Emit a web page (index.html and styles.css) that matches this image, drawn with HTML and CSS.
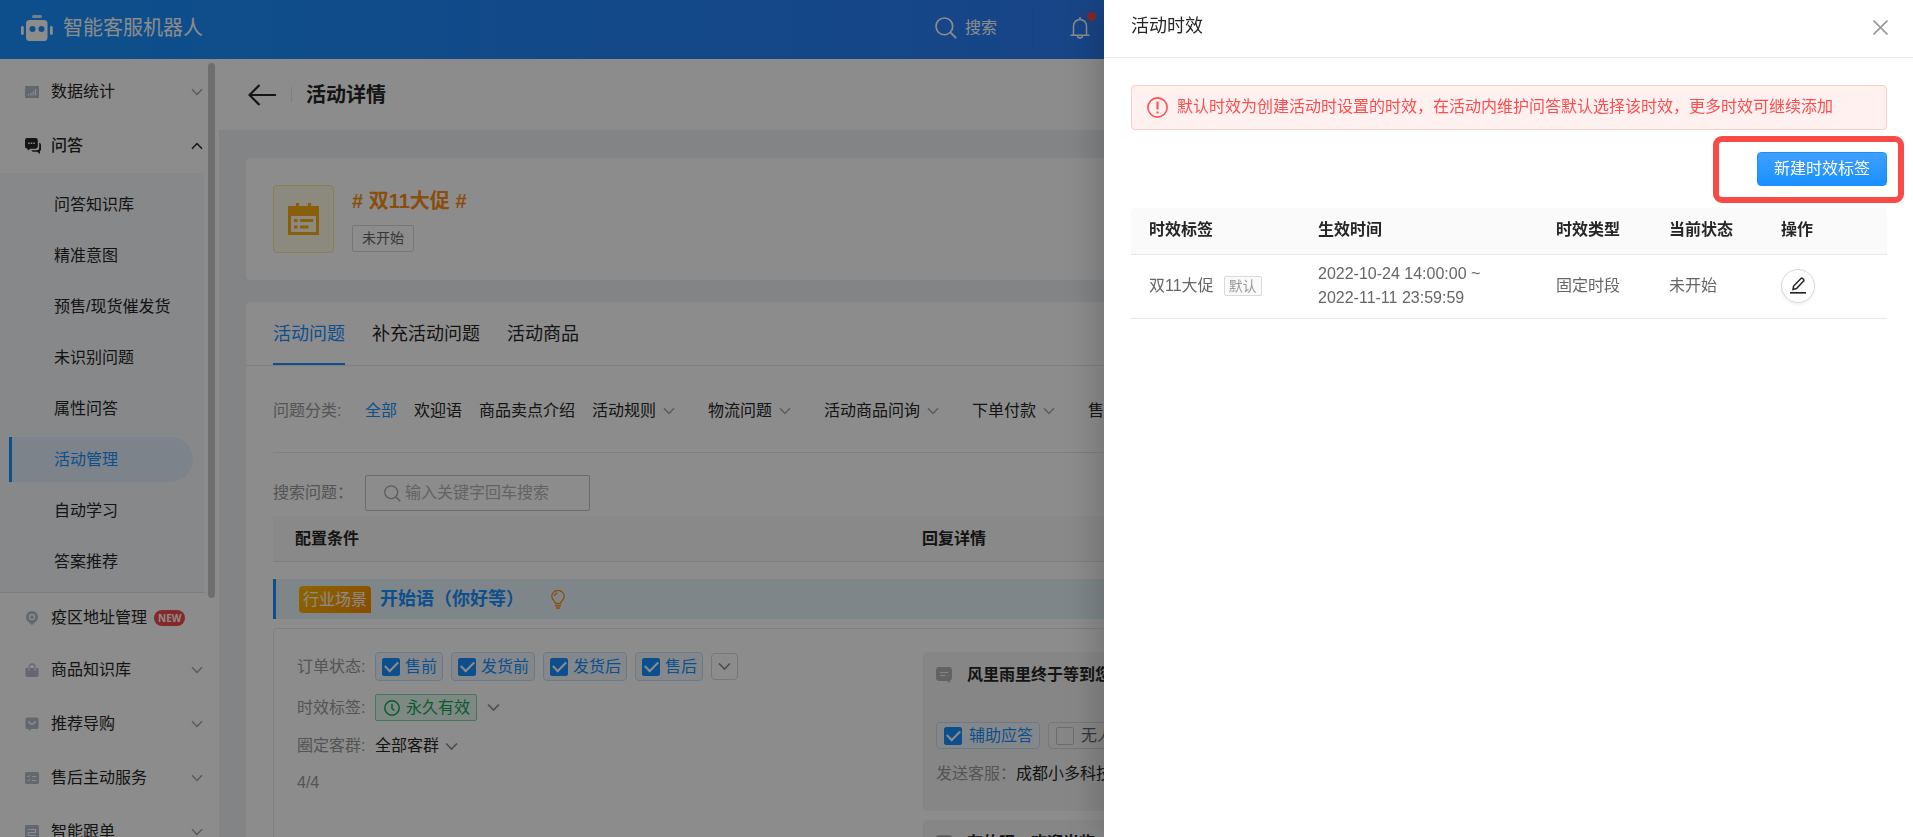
FILE: index.html
```html
<!DOCTYPE html>
<html lang="zh-CN">
<head>
<meta charset="utf-8">
<meta name="viewport" content="width=device-width, initial-scale=1">
<title>智能客服机器人</title>
<link rel="stylesheet" href="styles.css">
</head>
<body>
<svg class="defs" aria-hidden="true">
  <symbol id="chev" viewBox="0 0 12 8"><path d="M1 1.2 6 6.4 11 1.2" fill="none" stroke="currentColor" stroke-width="1.5"/></symbol>
  <symbol id="search" viewBox="0 0 20 20"><circle cx="8.5" cy="8.5" r="7.6" fill="none" stroke="currentColor" stroke-width="1.5"/><path d="m14 14 5.2 5.2" stroke="currentColor" stroke-width="1.7"/></symbol>
  <symbol id="msg" viewBox="0 0 16 16"><path d="M3 0h10a3 3 0 0 1 3 3v8a3 3 0 0 1-2 2.8V16l-3.500-2H3a3 3 0 0 1-3-3V3a3 3 0 0 1 3-3z" fill="currentColor"/><path d="M4 5.500h8M4 8.500h5" stroke="#f5f5f5" stroke-width="1.200"/></symbol>
</svg>

<div class="app">
  <header class="topbar">
    <div class="brand">
      <svg class="robot" width="32" height="26" viewBox="0 0 32 26"><path d="M12.500 0h7q1.500 0 1.500 1.500T19.500 3h-7Q11 3 11 1.500T12.500 0z" fill="#fff" opacity=".8"/><rect x="5" y="5" width="21.500" height="21" rx="3.500" fill="#fff"/><rect x="0" y="11" width="2.800" height="9" rx="1.400" fill="#fff"/><rect x="29" y="11" width="2.800" height="9" rx="1.400" fill="#fff"/><circle cx="11.500" cy="14" r="3" fill="#1890ff"/><circle cx="20.500" cy="14" r="3" fill="#1890ff"/></svg>
      <span>智能客服机器人</span>
    </div>
    <div class="tools">
      <button class="tool search-tool"><svg width="22" height="22"><use href="#search"/></svg>搜索</button>
      <span class="tool-sep"></span>
      <button class="tool bell" aria-label="通知"><svg width="20" height="22" viewBox="0 0 20 22"><path d="M3.500 18V9a6.500 6.500 0 0 1 13 0v9M.5 18.200h19M10 0v2.500M7.500 18.500a2.500 2.500 0 0 0 5 0" fill="none" stroke="currentColor" stroke-width="1.500"/></svg><i class="dot"></i></button>
    </div>
  </header>

  <div class="body">
    <nav class="side">
      <a class="item" href="#"><svg class="ico" viewBox="0 0 14 14"><rect y="1" width="14" height="12" rx="1" fill="currentColor"/><path d="M3.500 10.500v-1.500M6 10.500V8M8.200 10.500V6.500M10.500 10.500V4" stroke="#fff" stroke-width="1.200"/></svg>数据统计<svg class="chev"><use href="#chev"/></svg></a>
      <a class="item open" href="#"><svg class="ico" viewBox="0 0 15 15"><path d="M2 0h8a2 2 0 0 1 2 2v6a2 2 0 0 1-2 2H5l-2.500 2v-2H2a2 2 0 0 1-2-2V2a2 2 0 0 1 2-2z" fill="currentColor"/><path d="M13.300 4.500A2 2 0 0 1 15 6.500v4a2 2 0 0 1-1 1.800V15l-2.800-2H8a2 2 0 0 1-2-1.500h5.300a2 2 0 0 0 2-2z" fill="currentColor"/><path d="M3 5h1.400M5.400 5h1.400M7.800 5h1.400" stroke="#fff" stroke-width="1.400"/></svg>问答<svg class="chev up"><use href="#chev"/></svg></a>
      <div class="sub">
        <a href="#">问答知识库</a>
        <a href="#">精准意图</a>
        <a href="#">预售/现货催发货</a>
        <a href="#">未识别问题</a>
        <a href="#">属性问答</a>
        <a class="active" href="#">活动管理</a>
        <a href="#">自动学习</a>
        <a href="#">答案推荐</a>
      </div>
      <a class="item short" href="#"><svg class="ico" viewBox="0 0 14 14"><path d="M7 0a6 6 0 0 1 6 6c0 3.600-3.500 6-6 8-2.500-2-6-4.400-6-8a6 6 0 0 1 6-6z" fill="currentColor"/><circle cx="7" cy="6" r="2.500" fill="none" stroke="#fff" stroke-width="1.300"/></svg>疫区地址管理<b class="new">NEW</b></a>
      <a class="item" href="#"><svg class="ico" viewBox="0 0 14 14"><path d="M.5 5h13V12a2 2 0 0 1-2 2h-9a2 2 0 0 1-2-2z" fill="currentColor"/><path d="M4 8V4a3 3 0 0 1 6 0v4" fill="none" stroke="currentColor" stroke-width="1.300"/><path d="M4 5v3M10 5v3" stroke="#fff" stroke-width="1"/></svg>商品知识库<svg class="chev"><use href="#chev"/></svg></a>
      <a class="item" href="#"><svg class="ico" viewBox="0 0 14 14"><path d="M2 .5h10a1.500 1.500 0 0 1 1.500 1.500v8.500a1.500 1.500 0 0 1-1.500 1.500H6.500L4 14v-2H2a1.500 1.500 0 0 1-1.500-1.500V2A1.500 1.500 0 0 1 2 .5z" fill="currentColor"/><path d="M4 4a3 3 0 0 0 6 0" fill="none" stroke="#fff" stroke-width="1.400"/></svg>推荐导购<svg class="chev"><use href="#chev"/></svg></a>
      <a class="item" href="#"><svg class="ico" viewBox="0 0 14 14"><rect y="1" width="14" height="12" rx="1.500" fill="currentColor"/><path d="m2.500 5 1 1 1.500-1.800M2.500 9l1 1L5 8.200M7 5.500h4.500M7 9.500h4.500" fill="none" stroke="#fff" stroke-width="1"/></svg>售后主动服务<svg class="chev"><use href="#chev"/></svg></a>
      <a class="item" href="#"><svg class="ico" viewBox="0 0 14 14"><rect width="14" height="14" rx="1.500" fill="currentColor"/><path d="M3 4.500h7.500v3H4.500a1.500 1.500 0 0 0 0 3H11" fill="none" stroke="#fff" stroke-width="1.200"/></svg>智能跟单<svg class="chev"><use href="#chev"/></svg></a>
      <i class="thumb"></i>
    </nav>

    <main class="main">
      <div class="pagehead">
        <button class="back" aria-label="返回"><svg width="28" height="22" viewBox="0 0 28 22"><path d="M11.500 1 1.500 11l10 10M1.500 11H28" fill="none" stroke="currentColor" stroke-width="2.200"/></svg></button>
        <span class="head-sep"></span>
        <h1>活动详情</h1>
      </div>

      <div class="content">
        <section class="card activity">
          <div class="act-ico"><svg width="31" height="32" viewBox="0 0 31 32"><path d="M0 3h8V0h3v3h9V0h3v3h8v29H0z" fill="#faad14"/><path d="M3 13h25v16H3z" fill="#fffbe6"/><path d="M6 17.500h3.500M12 17.500h13M6 24h3.500M12 24h8.500" stroke="#faad14" stroke-width="3.200"/></svg></div>
          <div>
            <h2># 双11大促 #</h2>
            <span class="tag">未开始</span>
          </div>
        </section>

        <section class="card detail">
          <div class="tabs">
            <a class="on" href="#">活动问题</a><a href="#">补充活动问题</a><a href="#">活动商品</a>
          </div>
          <div class="inner">
            <div class="filter">
              <span class="label">问题分类:</span>
              <a class="on" href="#">全部</a>
              <a href="#">欢迎语</a>
              <a href="#">商品卖点介绍</a>
              <a class="more" href="#">活动规则<svg class="chev"><use href="#chev"/></svg></a>
              <a class="more" href="#">物流问题<svg class="chev"><use href="#chev"/></svg></a>
              <a class="more" href="#">活动商品问询<svg class="chev"><use href="#chev"/></svg></a>
              <a class="more" href="#">下单付款<svg class="chev"><use href="#chev"/></svg></a>
              <a class="more" href="#">售后问题<svg class="chev"><use href="#chev"/></svg></a>
            </div>
            <div class="searchrow">
              <label class="label" for="q">搜索问题：</label>
              <div class="searchbox"><svg width="17" height="17"><use href="#search"/></svg><input id="q" type="text" placeholder="输入关键字回车搜索"></div>
            </div>
            <div class="thead"><span>配置条件</span><span>回复详情</span></div>
            <div class="scene">
              <span class="badge">行业场景</span>
              <h3>开始语（你好等）</h3>
              <svg class="bulb" width="14" height="19" viewBox="0 0 14 19"><path d="M4.500 13.500C4.500 11 .8 10 .8 6.500a6.200 6.200 0 0 1 12.400 0c0 3.500-3.700 4.500-3.700 7zM3.500 6a3.500 3.500 0 0 1 3-2.800" fill="none" stroke="currentColor" stroke-width="1.300"/><path d="M4 15.800h6M5 17.900h4" stroke="currentColor" stroke-width="1.500"/></svg>
            </div>
            <div class="qa">
              <div class="conds">
                <div class="cond">
                  <span class="label">订单状态:</span>
                  <div class="chips">
                    <label class="chip"><input type="checkbox" checked>售前</label>
                    <label class="chip"><input type="checkbox" checked>发货前</label>
                    <label class="chip"><input type="checkbox" checked>发货后</label>
                    <label class="chip"><input type="checkbox" checked>售后</label>
                    <button class="expand" aria-label="展开"><svg class="chev big"><use href="#chev"/></svg></button>
                  </div>
                </div>
                <div class="cond"><span class="label">时效标签:</span><span class="valid"><svg width="16" height="16" viewBox="0 0 16 16"><path d="M8 .8a7.200 7.200 0 1 1 0 14.400A7.200 7.200 0 0 1 8 .8M8 3.800V8.500L10.500 10.500" fill="none" stroke="currentColor" stroke-width="1.500"/></svg>永久有效</span><svg class="chev big gap"><use href="#chev"/></svg></div>
                <div class="cond people"><span class="label">圈定客群:</span><span>全部客群</span><svg class="chev big"><use href="#chev"/></svg></div>
                <div class="count">4/4</div>
              </div>
              <div class="replies">
                <article class="reply">
                  <h4><svg width="16" height="16"><use href="#msg"/></svg>风里雨里终于等到您</h4>
                  <div class="chips">
                    <label class="chip wide"><input type="checkbox" checked>辅助应答</label>
                    <label class="chip wide off"><input type="checkbox">无人值守</label>
                  </div>
                  <p><span class="label">发送客服：</span>成都小多科技</p>
                </article>
                <article class="reply">
                  <h4><svg width="16" height="16"><use href="#msg"/></svg>在的呢，欢迎光临</h4>
                </article>
              </div>
            </div>
          </div>
        </section>
      </div>
    </main>
  </div>
</div>

<div class="mask"></div>

<aside class="drawer" role="dialog" aria-labelledby="dt">
  <header class="dhead">
    <h2 id="dt">活动时效</h2>
    <button class="close" aria-label="关闭"><svg width="15" height="15" viewBox="0 0 15 15"><path d="m.5.5 14 14M14.500.5l-14 14" stroke="currentColor" stroke-width="1.600"/></svg></button>
  </header>
  <div class="dbody">
    <div class="alert"><svg width="21" height="21" viewBox="0 0 21 21"><circle cx="10.500" cy="10.500" r="9.600" fill="none" stroke="currentColor" stroke-width="1.600"/><path d="M10.500 4.500v8M10.500 14.500v2" stroke="currentColor" stroke-width="2"/></svg>默认时效为创建活动时设置的时效，在活动内维护问答默认选择该时效，更多时效可继续添加</div>
    <div class="actions"><button class="primary">新建时效标签</button></div>
    <table>
      <colgroup><col class="c1"><col class="c2"><col class="c3"><col class="c4"><col class="c5"></colgroup>
      <thead><tr><th>时效标签</th><th>生效时间</th><th>时效类型</th><th>当前状态</th><th>操作</th></tr></thead>
      <tbody><tr>
        <td><div class="name">双11大促<span class="default">默认</span></div></td>
        <td>2022-10-24 14:00:00 ~<br>2022-11-11 23:59:59</td>
        <td>固定时段</td>
        <td>未开始</td>
        <td><button class="edit" aria-label="编辑"><svg width="16" height="17" viewBox="0 0 16 17"><path d="M3 12.500 3.600 9 11 1.500q.8-.8 1.600 0l1 1q.8.8 0 1.600L6.500 11.600z" fill="none" stroke="currentColor" stroke-width="1.500"/><path d="M0 15.800h16" stroke="currentColor" stroke-width="1.700"/></svg></button></td>
      </tr></tbody>
    </table>
  </div>
</aside>
</body>
</html>
```
FILE: styles.css
```css
* { box-sizing: border-box; }

body {
  margin: 0;
  height: 100vh;
  overflow: hidden;
  font-family: "Liberation Sans", "Noto Sans CJK SC", sans-serif;
  font-size: 16px;
  line-height: 24px;
  color: #262626;
}

a { color: inherit; text-decoration: none; }
button { font: inherit; color: inherit; background: none; border: 0; padding: 0; cursor: pointer; }
h1, h2, h3, h4, p { margin: 0; }
svg { display: block; flex: none; }

.defs { position: absolute; width: 0; height: 0; }
.chev { width: 12px; height: 8px; color: #a6a6a6; }
.chev.up { transform: rotate(180deg); color: #262626; }
.chev.big { width: 13px; height: 9px; color: #8c8c8c; }
.label { color: #999; }

.app { height: 100%; display: flex; flex-direction: column; overflow: hidden; }

/* top bar */
.topbar {
  flex: none;
  height: 59px;
  display: grid;
  grid-template-columns: 935px 1fr;
  padding-bottom: 4px;
  color: #fff;
  background: linear-gradient(90deg, #1890ff, #3a70ee);
}
.brand { display: flex; align-items: center; gap: 10px; padding-left: 21px; font-size: 20px; }
.tools { display: flex; align-items: center; }
.tool { display: flex; align-items: center; position: relative; }
.search-tool { gap: 8px; }
.tool-sep { width: 1px; height: 44px; margin: 0 36px; background: #2477e6; }
.dot { position: absolute; top: -5px; right: -6px; width: 9px; height: 9px; border-radius: 50%; background: #f5474b; }

.body { flex: 1; min-height: 0; display: flex; }

/* side menu */
.side { flex: none; position: relative; width: 219px; padding-top: 6px; overflow: hidden; background: #fff; }
.item { display: flex; align-items: center; height: 54px; padding: 0 16px 0 25px; }
.item.short { height: 50px; }
.item .chev { margin-left: auto; }
.ico { width: 14px; height: 14px; margin-right: 12px; color: #b4bccb; }
.open { font-weight: 500; }
.open .ico { width: 16px; height: 16px; margin-right: 10px; color: #262626; }
.new {
  margin-left: 7px;
  padding: 0 4px;
  border-radius: 8px;
  font: bold 10px/16px "Open Sans", sans-serif;
  color: #fff;
  background: #f5474b;
}
.sub {
  display: flex;
  flex-direction: column;
  gap: 6px;
  width: 204px;
  padding: 9px 11px 8px 9px;
  background: #f6f8fb;
  border-bottom: 1px solid #dde8f3;
}
.sub a { height: 45px; padding-left: 42px; border-left: 3px solid transparent; line-height: 45px; }
.sub .active { color: #1890ff; background: #e3effb; border-color: #1890ff; border-radius: 0 23px 23px 0; }
.thumb { position: absolute; top: 4px; right: 4px; width: 7px; height: 535px; border-radius: 4px; background: #c8c8c8; }

/* main area */
.main { flex: 1; min-width: 0; display: flex; flex-direction: column; background: #eef0f4; }
.pagehead { flex: none; height: 71px; display: flex; align-items: center; padding-left: 29px; background: #fff; }
.head-sep { width: 1px; height: 15px; margin: 0 14px 0 15px; background: #e8e8e8; }
h1 { font-size: 20px; }

.content { display: flex; flex-direction: column; gap: 22px; padding: 28px 27px; }
.card { background: #fff; border-radius: 4px; }
.activity { display: flex; gap: 18px; padding: 27px; }
.act-ico {
  display: grid;
  place-items: center;
  width: 61px;
  height: 68px;
  border: 1px solid #ffe58f;
  border-radius: 4px;
  background: #fffbe6;
}
.activity h2 { margin: 4px 0 12px; font-size: 20px; line-height: 24px; color: #fa8c16; }
.tag {
  display: inline-block;
  padding: 0 9px;
  border: 1px solid #d9d9d9;
  border-radius: 2px;
  font-size: 14px;
  line-height: 25px;
  color: #666;
}

.tabs { display: flex; gap: 27px; padding: 0 27px; border-bottom: 1px solid #e8e8e8; font-size: 18px; }
.tabs a { height: 63px; line-height: 64px; }
.tabs .on { color: #1890ff; border-bottom: 2px solid #1890ff; }

.inner { padding: 0 27px; }
.filter { display: flex; align-items: center; gap: 17px; height: 87px; padding-top: 3px; border-bottom: 1px solid #e8e8e8; white-space: nowrap; }
.filter .label { width: 75px; }
.filter .on { color: #1890ff; }
.more { display: flex; align-items: center; gap: 7px; margin-right: 16px; }

.searchrow { display: flex; align-items: center; padding: 22px 0 5px; }
.searchrow .label { width: 92px; }
.searchbox {
  display: flex;
  align-items: center;
  gap: 4px;
  width: 225px;
  height: 36px;
  padding: 0 18px;
  border: 1px solid #c4c4c4;
  border-radius: 2px;
  color: #a6a6a6;
}
.searchbox input { width: 100%; min-width: 0; padding: 0; border: 0; outline: 0; background: none; font: inherit; }
.searchbox input::placeholder { color: #b5b5b5; }

.thead {
  display: grid;
  grid-template-columns: 627px 1fr;
  padding: 11px 22px 10px;
  border-bottom: 1px solid #e8e8e8;
  background: #f9f9f9;
  font-weight: bold;
}
.scene {
  display: flex;
  align-items: center;
  height: 40px;
  margin: 17px 0 9px;
  padding-left: 23px;
  border-left: 3px solid #1890ff;
  background: #e6f4fc;
}
.badge {
  padding: 0 4px;
  border-radius: 4px 4px 0 4px;
  line-height: 27px;
  color: #fff;
  background: linear-gradient(135deg, #ffb900, #fa8c00);
}
.scene h3 { margin: 0 27px 0 9px; font-size: 18px; color: #1890ff; }
.bulb { color: #fa8c16; }

.qa {
  display: grid;
  grid-template-columns: 626px 1fr;
  padding: 23px;
  border: 1px solid #e8e8e8;
  border-radius: 4px;
}
.conds { display: flex; flex-direction: column; }
.cond { display: flex; align-items: center; margin-bottom: 13px; }
.cond .label { flex: none; width: 78px; }
.people svg { margin-left: 6px; }
.count { color: #999; }
.chips { display: flex; gap: 8px; }
.chip {
  display: flex;
  align-items: center;
  gap: 5px;
  height: 29px;
  padding: 0 5px 0 6px;
  border: 1px solid #c5dff8;
  border-radius: 4px;
  white-space: nowrap;
  color: #1890ff;
  background: #f2f8fe;
}
.chip input {
  appearance: none;
  display: grid;
  place-items: center;
  width: 18px;
  height: 18px;
  margin: 0;
  border: 1px solid #c4c4c4;
  border-radius: 2px;
}
.chip input:checked { border-color: #1890ff; background: #1890ff; }
.chip input:checked::after {
  content: "";
  width: 11px;
  height: 6px;
  margin-bottom: 3px;
  border: solid #fff;
  border-width: 0 0 2px 2px;
  transform: rotate(-45deg);
}
.chip.wide { gap: 7px; height: 27px; padding: 0 6px 0 7px; }
.chip.off { color: #666; border-color: #d9d9d9; background: none; }
.expand { display: grid; place-items: center; width: 27px; height: 27px; margin-top: 1px; border: 1px solid #d9d9d9; border-radius: 4px; }
.valid {
  display: flex;
  align-items: center;
  gap: 6px;
  height: 27px;
  padding: 0 6px 0 8px;
  border: 1px solid #7fd8a4;
  border-radius: 2px;
  color: #13a558;
  background: #e6f9ee;
}
.gap { margin-left: 10px; }

.replies { display: flex; flex-direction: column; gap: 9px; }
.reply { padding: 11px 13px; border-radius: 4px; background: #f5f5f5; }
.reply:first-child { padding-bottom: 25px; }
.reply h4 { display: flex; align-items: center; gap: 15px; font-size: 16px; white-space: nowrap; }
.reply h4 svg { color: #b5b5b5; }
.reply .chips { margin: 35px 0 13px; }
.reply p { white-space: nowrap; }

/* overlay and drawer */
.mask { position: fixed; inset: 0; background: rgba(0, 0, 0, 0.45); }
.drawer {
  position: fixed;
  top: 0;
  right: 0;
  bottom: 0;
  width: 809px;
  background: #fff;
  box-shadow: -7px 0 36px rgba(0, 0, 0, 0.2);
}
.dhead { display: flex; align-items: center; justify-content: space-between; height: 58px; padding: 0 25px 6px 27px; border-bottom: 1px solid #e8e8e8; }
.dhead h2 { font-size: 18px; font-weight: normal; }
.close { color: #999; padding-top: 3px; }
.dbody { padding: 27px 26px 27px 27px; }
.alert {
  display: flex;
  align-items: center;
  gap: 9px;
  height: 45px;
  padding: 0 0 1px 15px;
  border: 1px solid #ffccc7;
  border-radius: 4px;
  white-space: nowrap;
  color: #ff4d4f;
  background: #fff1f0;
}
.actions { display: flex; justify-content: flex-end; padding: 22px 0; }
.primary {
  position: relative;
  width: 130px;
  height: 34px;
  border: 1px solid #1890ff;
  border-radius: 4px;
  color: #fff;
  background: linear-gradient(#40a0ff, #1890ff);
}
.primary::after {
  content: "";
  position: absolute;
  inset: -17px -18px -18px -45px;
  border: 6px solid #f84b48;
  border-radius: 9px;
}

table { width: 100%; table-layout: fixed; border-collapse: collapse; }
.c1 { width: 169px; }
.c2 { width: 238px; }
.c3 { width: 113px; }
.c4 { width: 112px; }
th, td { padding: 7px 0 8px 18px; border-bottom: 1px solid #e8e8e8; text-align: left; }
th { height: 46px; background: #fafafa; }
th:first-child { border-top-left-radius: 4px; }
th:last-child { border-top-right-radius: 4px; }
td { color: #666; }
.name { display: flex; align-items: center; gap: 10px; }
.default {
  padding: 0 4px;
  border: 1px solid #d9d9d9;
  border-radius: 2px;
  font-size: 14px;
  line-height: 18px;
  color: #999;
  background: #fafafa;
}
.edit {
  display: grid;
  place-items: center;
  width: 34px;
  height: 34px;
  border: 1px solid #d9d9d9;
  border-radius: 50%;
  color: #262626;
  box-shadow: 0 2px 3px rgba(0, 0, 0, 0.06);
}
```
